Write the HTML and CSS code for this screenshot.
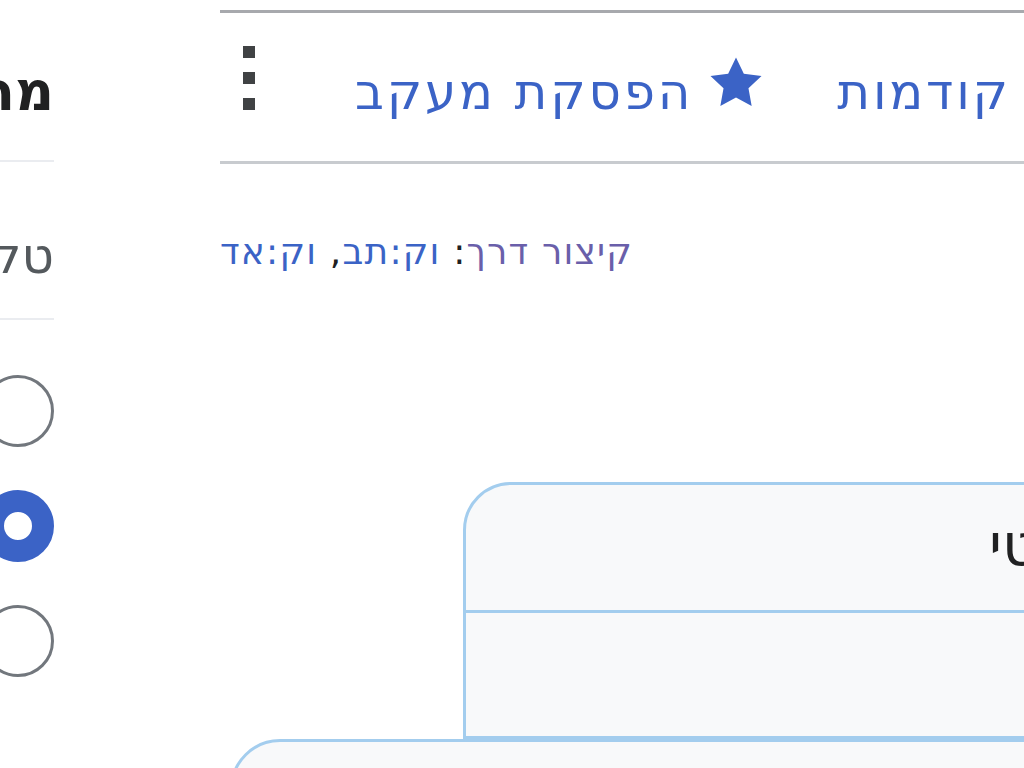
FILE: index.html
```html
<!DOCTYPE html>
<html lang="he">
<head>
<meta charset="utf-8">
<title>ויקיפדיה</title>
<link rel="stylesheet" href="styles.css">
</head>
<body>
<div class="page">
  <aside class="side">
    <div class="side-head"><h2 class="side-title">מראה</h2></div>
    <div class="side-section"><div class="side-label">טקסט</div></div>
    <ul class="radios">
      <li class="radio-row"><span class="radio"></span><span class="radio-label">קטן</span></li>
      <li class="radio-row"><span class="radio checked"></span><span class="radio-label">רגיל</span></li>
      <li class="radio-row"><span class="radio"></span><span class="radio-label">גדול</span></li>
    </ul>
  </aside>
  <main class="main">
    <nav class="tabs">
      <a class="tab history">גרסאות קודמות</a>
      <a class="tab watch"><svg class="star" viewBox="0 0 20 20" aria-hidden="true"><path d="M10 1.2l2.7 5.6 6.1.8-4.5 4.2 1.1 6.1L10 15l-5.4 2.9 1.1-6.1L1.2 7.6l6.1-.8z"/></svg><span>הפסקת מעקב</span></a>
      <span class="more" aria-label="עוד"><span class="dot"></span><span class="dot"></span><span class="dot"></span></span>
    </nav>
    <div class="content">
      <div class="shortcut-wrap">
        <div class="shortcut"><span class="sc-label">קיצור דרך</span><span class="sc-colon">:</span> <a class="sc-link">וק:תב</a><span class="sc-comma">,</span> <a class="sc-link">וק:אד</a></div>
      </div>
      <section class="card card-top">
        <div class="card-head"><h3 class="card-title">מידע סטטיסטי</h3></div>
        <div class="card-body"></div>
      </section>
      <section class="card card-main"></section>
    </div>
  </main>
</div>
</body>
</html>
```
FILE: styles.css
```css
html, body {
  margin: 0;
  padding: 0;
  background: #ffffff;
  overflow: hidden;
  width: 1024px;
  height: 768px;
}
body {
  font-family: "DejaVu Sans", "Open Sans", sans-serif;
  color: #202122;
}
.page {
  display: flex;
  direction: ltr;
  align-items: flex-start;
}
.side {
  width: 54px;
  flex: none;
  direction: rtl;
  white-space: nowrap;
}
.side-head {
  height: 162px;
  border-bottom: 2px solid #eaecf0;
  box-sizing: border-box;
  padding-top: 56px;
}
.side-title {
  margin: 0;
  font-size: 54px;
  line-height: 72px;
  font-weight: 700;
  color: #202122;
}
.side-section {
  height: 158px;
  border-bottom: 2px solid #eaecf0;
  box-sizing: border-box;
  padding-top: 62px;
}
.side-label {
  font-size: 50px;
  line-height: 64px;
  color: #54595d;
}
.radios {
  list-style: none;
  margin: 0;
  padding: 55px 0 0 0;
  display: flex;
  flex-direction: column;
  gap: 43px;
}
.radio-row {
  display: flex;
  align-items: center;
  gap: 24px;
  height: 72px;
}
.radio {
  width: 72px;
  height: 72px;
  box-sizing: border-box;
  border-radius: 50%;
  border: 3px solid #72777d;
  background: #ffffff;
  flex: none;
}
.radio.checked {
  border: 22px solid #3b63c6;
}
.radio-label {
  font-size: 50px;
  color: #202122;
}
.main {
  margin-left: 166px;
  width: 1100px;
  flex: none;
  direction: rtl;
  margin-top: 10px;
}
.tabs {
  display: flex;
  justify-content: flex-end;
  align-items: center;
  height: 154px;
  box-sizing: border-box;
  border-top: 3px solid #a7a9ad;
  border-bottom: 3px solid #c8cbcf;
  padding-left: 23px;
  white-space: nowrap;
}
.tab {
  color: #3b63c6;
  font-size: 50px;
  letter-spacing: 2.8px;
  text-decoration: none;
  padding-top: 10px;
}
.history {
  margin-left: 70px;
}
.watch {
  display: flex;
  align-items: center;
  gap: 12px;
  margin-left: 100px;
}
.star {
  width: 62px;
  height: 58px;
  fill: #3b63c6;
  flex: none;
  margin-bottom: 18px;
}
.more {
  display: flex;
  flex-direction: column;
  gap: 14px;
  margin-bottom: 18px;
}
.dot {
  width: 12px;
  height: 12px;
  background: #404244;
}
.content {
  padding-top: 62px;
}
.shortcut-wrap {
  display: flex;
  justify-content: flex-end;
}
.shortcut {
  font-size: 36px;
  line-height: 52px;
  letter-spacing: 1.2px;
  color: #202122;
}
.sc-label {
  color: #6a5faa;
}
.sc-link {
  color: #3b63c6;
}
.card {
  background: #f8f9fa;
  border: 3px solid #a3cdee;
  box-sizing: border-box;
}
.card-top {
  margin-top: 204px;
  margin-left: 243px;
  height: 257px;
  border-radius: 48px 48px 0 0;
  display: flex;
  flex-direction: column;
}
.card-head {
  height: 128px;
  border-bottom: 3px solid #a3cdee;
  box-sizing: border-box;
  display: flex;
  justify-content: flex-end;
  align-items: center;
  padding-left: 523px;
}
.card-title {
  margin: 0 0 6px 0;
  font-size: 58px;
  font-weight: 400;
  color: #202122;
  white-space: nowrap;
}
.card-body {
  flex: 1;
}
.card-main {
  margin-left: 10px;
  height: 200px;
  border-radius: 50px 50px 0 0;
}
```
